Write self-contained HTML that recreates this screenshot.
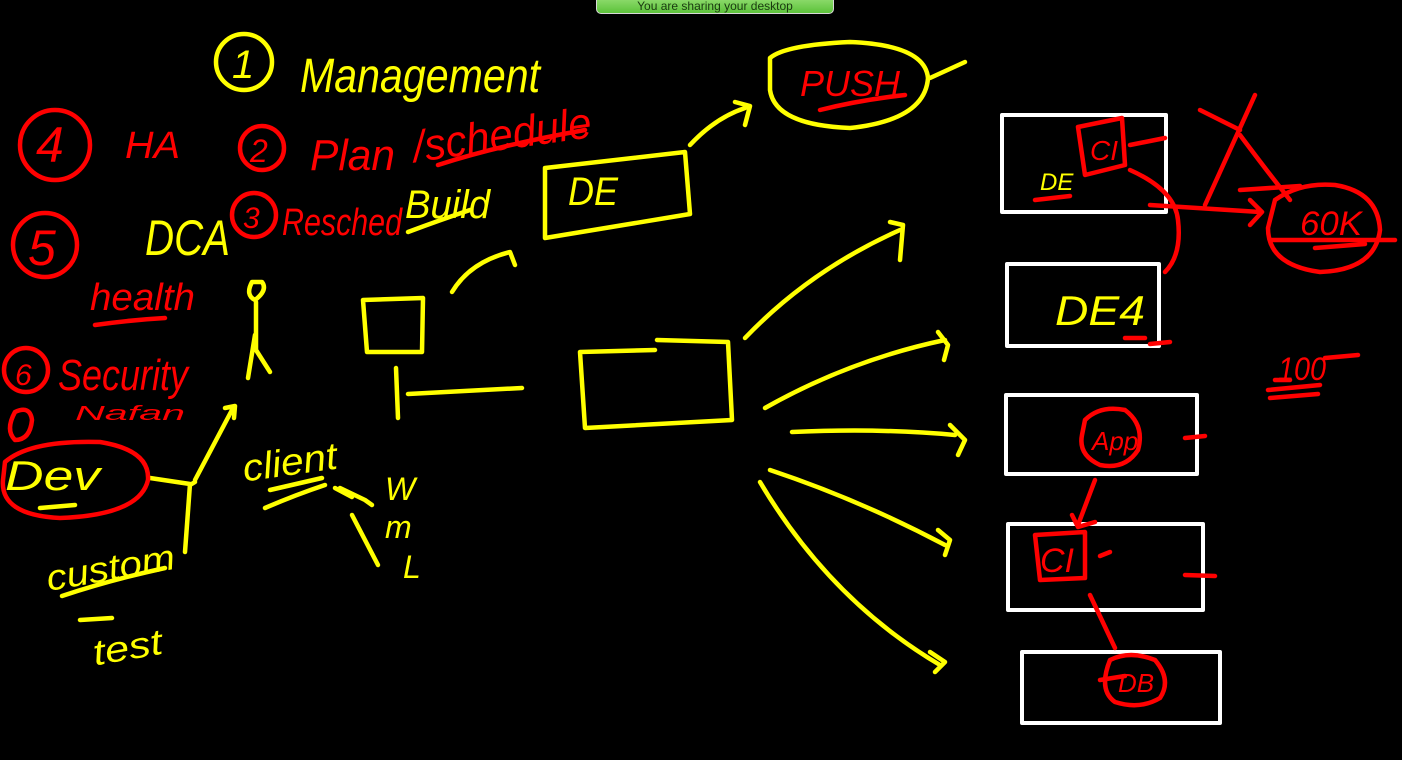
<!DOCTYPE html>
<html><head><meta charset="utf-8"><style>
html,body{margin:0;padding:0;background:#000;width:1402px;height:760px;overflow:hidden}
svg{position:absolute;left:0;top:0}
.banner{position:absolute;left:596px;top:-6px;width:238px;height:20px;border-radius:5px;background:linear-gradient(#9be27a,#5cc23a);border:1px solid #d8d8d8;box-sizing:border-box;font:12px "Liberation Sans",sans-serif;color:#1a3a10;text-align:center;line-height:22px}
</style></head><body>
<svg width="1402" height="760" viewBox="0 0 1402 760" fill="none" stroke-linecap="round" stroke-linejoin="round">
<g stroke="#ffff00" stroke-width="4.5">
<circle cx="244" cy="62" r="28"/>
<path d="M363 300 L423 298 L422 352 L367 352 Z"/>
<path d="M396 368 L398 418"/>
<path d="M408 394 L522 388"/>
<path d="M580 352 L655 350 M657 340 L728 342 L732 420 L585 428 L580 352"/>
<path d="M545 168 L685 152 L690 214 L545 238 Z"/>
<path d="M690 145 Q715 118 745 108 M735 102 L750 106 L745 125"/>
<path d="M452 292 Q470 262 510 252 L515 265"/>
<path d="M770 58 Q785 45 850 42 Q925 45 928 78 Q925 120 850 128 Q775 125 770 90 Z"/>
<path d="M930 78 L965 62"/>
<path d="M745 338 Q810 270 900 230 M890 222 L903 225 L900 260"/>
<path d="M765 408 Q850 360 945 340 M938 332 L948 345 L944 360"/>
<path d="M792 432 Q880 428 955 435 M950 425 L965 440 L958 455"/>
<path d="M770 470 Q860 500 945 545 M938 530 L950 540 L945 555"/>
<path d="M760 482 Q830 600 940 665 M930 652 L945 662 L935 672"/>
<path d="M252 282 Q245 295 255 300 Q268 290 262 282 Z M256 302 L256 350 M255 335 L248 378 M256 350 L270 372"/>
<path d="M195 480 L232 410 M225 408 L235 406 L234 418"/>
<path d="M150 478 L190 484 L185 552 M190 485 L195 482"/>
<path d="M265 508 Q295 495 325 485 M270 490 L322 478"/>
<path d="M335 488 L352 497 M340 488 L365 500 L372 505"/>
<path d="M352 515 L378 565"/>
<path d="M408 232 Q440 220 470 210"/>
<path d="M40 508 L75 505"/>
<path d="M62 596 Q110 580 165 568"/>
<path d="M80 620 L112 618"/>
</g>
<g stroke="#fff" stroke-width="4" fill="none">
<rect x="1002" y="115" width="164" height="97"/>
<rect x="1007" y="264" width="152" height="82"/>
<rect x="1006" y="395" width="191" height="79"/>
<rect x="1008" y="524" width="195" height="86"/>
<rect x="1022" y="652" width="198" height="71"/>
</g>
<g stroke="#ff0000" stroke-width="4.5">
<circle cx="55" cy="145" r="35"/>
<circle cx="262" cy="148" r="22"/>
<circle cx="45" cy="245" r="32"/>
<circle cx="254" cy="215" r="22"/>
<circle cx="26" cy="370" r="22"/>
<path d="M15 412 Q5 430 15 440 Q30 440 32 420 Q30 405 15 412"/>
<path d="M5 462 Q30 440 100 442 Q150 450 148 480 Q140 515 60 518 Q0 515 3 480 Z"/>
<path d="M95 325 Q130 320 165 318"/>
<path d="M1078 127 L1122 118 L1125 165 L1085 175 Z"/>
<path d="M1130 145 L1165 138"/>
<path d="M1130 170 Q1175 190 1178 220 Q1182 255 1165 272"/>
<path d="M1150 205 L1260 212 M1250 200 L1262 212 L1250 225"/>
<path d="M1200 110 L1240 130 M1255 95 L1205 205"/>
<path d="M1240 135 Q1270 175 1290 200"/>
<path d="M1240 190 L1300 186"/>
<path d="M1275 200 Q1300 182 1335 185 Q1378 192 1380 230 Q1375 270 1320 272 Q1268 265 1268 228 Z"/>
<path d="M1270 240 L1395 240 M1315 248 L1365 244"/>
<path d="M1035 200 L1070 196"/>
<path d="M1150 344 L1170 342"/>
<path d="M1125 338 L1145 338"/>
<path d="M1275 380 L1290 380 M1270 398 L1318 394 M1268 390 L1320 385 M1325 358 L1358 355"/>
<path d="M1085 420 Q1100 405 1125 410 Q1145 425 1138 450 Q1125 470 1100 465 Q1078 455 1082 435 Z"/>
<path d="M1185 438 L1205 436"/>
<path d="M1095 480 L1078 525 M1072 515 L1078 527 L1095 522"/>
<path d="M1035 535 L1085 532 L1085 578 L1040 580 Z"/>
<path d="M1100 556 L1110 552"/>
<path d="M1185 575 L1215 576"/>
<path d="M1090 595 L1115 648"/>
<path d="M1110 660 Q1130 650 1155 660 Q1172 680 1160 698 Q1140 710 1115 702 Q1098 690 1110 660 Z"/>
<path d="M1100 680 L1125 676"/>
<path d="M820 110 Q860 100 905 95"/>
<path d="M438 165 Q500 145 585 130"/>
</g>
<g font-family="Liberation Sans, sans-serif" font-style="italic">
<g fill="#ffff00">
<text x="232" y="78" font-size="40">1</text>
<text x="300" y="92" font-size="48" textLength="240" lengthAdjust="spacingAndGlyphs">Management</text>
<text x="145" y="255" font-size="50" textLength="85" lengthAdjust="spacingAndGlyphs">DCA</text>
<text x="405" y="218" font-size="40" textLength="85" lengthAdjust="spacingAndGlyphs">Build</text>
<text x="568" y="205" font-size="40" textLength="50" lengthAdjust="spacingAndGlyphs">DE</text>
<text x="1055" y="325" font-size="42" textLength="90" lengthAdjust="spacingAndGlyphs">DE4</text>
<text x="5" y="490" font-size="42" textLength="95" lengthAdjust="spacingAndGlyphs">Dev</text>
<text x="45" y="580" font-size="36" textLength="130" lengthAdjust="spacingAndGlyphs" transform="rotate(-10 110 565)">custom</text>
<text x="92" y="660" font-size="36" textLength="70" lengthAdjust="spacingAndGlyphs" transform="rotate(-10 125 645)">test</text>
<text x="242" y="475" font-size="38" textLength="95" lengthAdjust="spacingAndGlyphs" transform="rotate(-8 290 460)">client</text>
<text x="385" y="500" font-size="32">W</text>
<text x="385" y="538" font-size="32">m</text>
<text x="403" y="578" font-size="32">L</text>
<text x="1040" y="190" font-size="24">DE</text>
</g>
<g fill="#ff0000">
<text x="36" y="162" font-size="50">4</text>
<text x="125" y="158" font-size="38" textLength="55" lengthAdjust="spacingAndGlyphs">HA</text>
<text x="250" y="162" font-size="32">2</text>
<text x="310" y="170" font-size="44" textLength="85" lengthAdjust="spacingAndGlyphs">Plan</text>
<text x="412" y="150" font-size="44" textLength="180" lengthAdjust="spacingAndGlyphs" transform="rotate(-8 500 135)">/schedule</text>
<text x="28" y="265" font-size="50">5</text>
<text x="243" y="228" font-size="30">3</text>
<text x="282" y="235" font-size="38" textLength="120" lengthAdjust="spacingAndGlyphs">Resched</text>
<text x="90" y="310" font-size="38" textLength="105" lengthAdjust="spacingAndGlyphs">health</text>
<text x="15" y="385" font-size="30">6</text>
<text x="58" y="390" font-size="44" textLength="130" lengthAdjust="spacingAndGlyphs">Security</text>
<text x="75" y="420" font-size="20" textLength="110" lengthAdjust="spacingAndGlyphs">Nafan</text>
<text x="800" y="96" font-size="36" textLength="100" lengthAdjust="spacingAndGlyphs">PUSH</text>
<text x="1090" y="160" font-size="28">CI</text>
<text x="1300" y="235" font-size="34" textLength="62" lengthAdjust="spacingAndGlyphs">60K</text>
<text x="1278" y="380" font-size="32" textLength="48" lengthAdjust="spacingAndGlyphs">100</text>
<text x="1092" y="450" font-size="26">App</text>
<text x="1040" y="572" font-size="34">CI</text>
<text x="1118" y="692" font-size="26">DB</text>
</g>
</g>
</svg>
<div class="banner">You are sharing your desktop</div>
</body></html>
